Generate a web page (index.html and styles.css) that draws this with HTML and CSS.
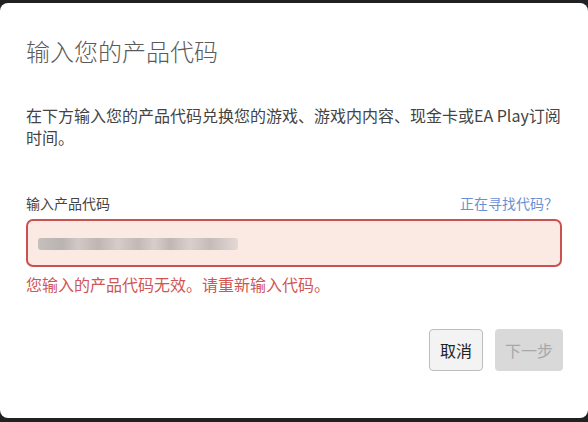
FILE: index.html
```html
<!DOCTYPE html>
<html lang="zh-CN">
<head>
<meta charset="UTF-8">
<meta name="viewport" content="width=device-width, initial-scale=1.0">
<title>输入您的产品代码</title>
<link rel="stylesheet" href="styles.css">
</head>
<body>

<div class="dialog">
  <h2 class="dialog-title">输入您的产品代码</h2>

  <p class="dialog-text">在下方输入您的产品代码兑换您的游戏、游戏内内容、现金卡或EA Play订阅时间。</p>

  <div class="field-head">
    <label for="code">输入产品代码</label>
    <a href="#" class="help-link">正在寻找代码？</a>
  </div>
  <div class="code-input">
    <span class="blurred"></span>
  </div>
  <div class="error-text">您输入的产品代码无效。请重新输入代码。</div>

  <div class="actions">
    <button type="button" class="btn btn-cancel">取消</button>
    <button type="button" class="btn btn-next" disabled>下一步</button>
  </div>
</div>

</body>
</html>
```

FILE: styles.css
```css
html, body {
  margin: 0;
  height: 100%;
}
body {
  background: #1f2123;
  font-family: "Noto Sans CJK SC", "Noto Sans", sans-serif;
  padding-top: 3px;
  box-sizing: border-box;
}
.dialog {
  background: #fff;
  border-radius: 8px;
  height: 415px;
  padding: 32px 26px 0 26px;
  box-sizing: border-box;
}
.dialog-title {
  margin: 0;
  font-size: 24px;
  line-height: 32px;
  font-weight: 300;
  color: #5a5a5a;
}
.dialog-text {
  margin: 37px 0 0 0;
  font-size: 16px;
  line-height: 22px;
  color: #444;
}
.field-head {
  display: flex;
  justify-content: space-between;
  margin-top: 45px;
  font-size: 14px;
  line-height: 20px;
}
.field-head label {
  color: #444;
}
.help-link {
  color: #6b8fd3;
  text-decoration: none;
  margin-right: 4px;
}
.code-input {
  margin-top: 6px;
  height: 48px;
  box-sizing: border-box;
  border: 2px solid #c9514f;
  border-radius: 7px;
  background: #fbe9e3;
  display: flex;
  align-items: center;
  padding-left: 10px;
}
.blurred {
  display: block;
  width: 200px;
  height: 12px;
  margin-top: 2px;
  border-radius: 3px;
  background: linear-gradient(90deg, #c4c0be 0, #b9b3b1 12%, #d2c8c5 20%, #bfb6b3 30%, #d6ccc9 40%, #c2b8b5 50%, #d8cdca 58%, #c0b7b4 66%, #dacfcc 76%, #c5bcb9 86%, #e3d8d4 100%);
}
.error-text {
  margin-top: 6px;
  font-size: 16px;
  line-height: 22px;
  color: #cf5654;
}
.actions {
  display: flex;
  justify-content: flex-end;
  gap: 12px;
  margin-top: 34px;
  margin-right: -1px;
}
.btn {
  font-family: inherit;
  font-size: 16px;
  height: 42px;
  border-radius: 4px;
  padding: 0 10px;
  cursor: pointer;
}
.btn-cancel {
  background: #f3f3f3;
  border: 1px solid #bdbdbd;
  color: #222;
}
.btn-next {
  background: #d9d9d9;
  border: none;
  color: #a8a8a8;
}
```
